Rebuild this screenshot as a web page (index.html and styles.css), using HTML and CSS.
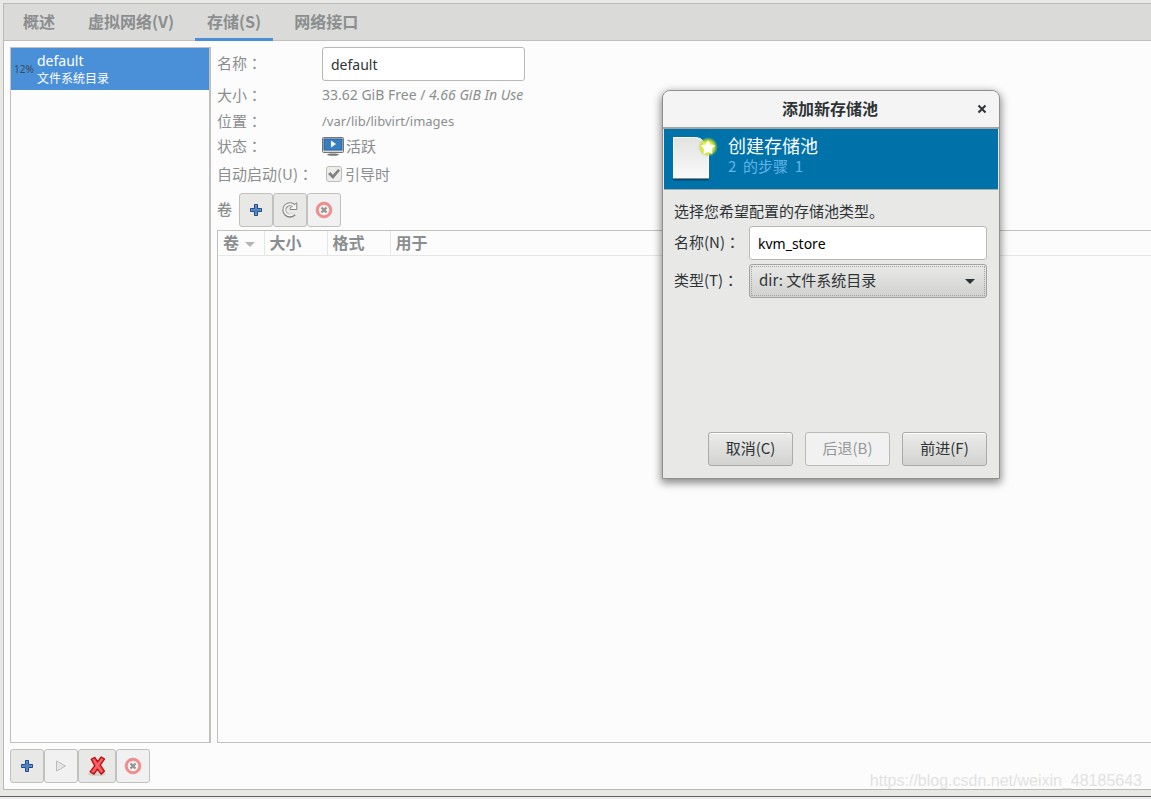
FILE: index.html
```html
<!DOCTYPE html>
<html lang="zh-CN">
<head>
<meta charset="utf-8">
<title>存储</title>
<link rel="stylesheet" href="styles.css">
</head>
<body>
<svg class="defs" width="0" height="0" aria-hidden="true">
  <defs>
    <linearGradient id="page" x1="0" y1="0" x2="0" y2="1"><stop offset="0" stop-color="#e2e3e0"/><stop offset="1" stop-color="#fafafa"/></linearGradient>
    <radialGradient id="glow"><stop offset=".45" stop-color="#f4f53a"/><stop offset=".7" stop-color="#c9de28" stop-opacity=".8"/><stop offset="1" stop-color="#a8d030" stop-opacity="0"/></radialGradient>
    <symbol id="plus" viewBox="0 0 16 16"><path d="M6.5 2.5h3v4h4v3h-4v4h-3v-4h-4v-3h4z" fill="#6f9cd2" stroke="#204a87" stroke-linejoin="round"/><path d="M8 4v8M4 8h8" stroke="#3f74b6" fill="none"/></symbol>
    <symbol id="stop" viewBox="0 0 18 18"><circle cx="9" cy="9" r="6.6" fill="#f5f1f0" stroke="#ef8d8d" stroke-width="2.6"/><circle cx="9" cy="9" r="8" fill="none" stroke="#e88787" stroke-width=".6"/><path d="M6.500 6.500l5 5M11.500 6.500l-5 5" stroke="#929492" stroke-width="2.2"/></symbol>
  </defs>
</svg>
<main class="window">
  <nav class="tabs">
    <button class="tab">概述</button>
    <button class="tab">虚拟网络(V)</button>
    <button class="tab active">存储(S)</button>
    <button class="tab">网络接口</button>
  </nav>
  <div class="content">
    <aside class="side">
      <div class="pools">
        <div class="pool">
          <span class="percent">12%</span>
          <div class="pool-text"><span class="pool-name">default</span><span class="pool-type">文件系统目录</span></div>
        </div>
      </div>
      <div class="toolbar">
        <button class="tool" aria-label="添加池"><svg width="16" height="16"><use href="#plus"/></svg></button>
        <button class="tool off" aria-label="启动池" disabled><svg width="16" height="16" viewBox="0 0 16 16"><path d="M3.5 3l9 5-9 5z" fill="#e6e6e5" stroke="#bbbcba" stroke-linejoin="round"/></svg></button>
        <button class="tool wide" aria-label="停止池"><svg width="20" height="20" viewBox="0 0 20 20"><ellipse cx="10" cy="18" rx="9" ry="2" fill="#cfcfcd"/><path d="M4.200 3.200L7.800 1.400L10.600 5.600L14.200 .9L17.600 3L13.400 9L17.400 15.200L14.200 18.200L10.400 13.400L7 18.200L3 15.800L7.600 9.800Z" fill="#ef4b4b" stroke="#b50d14" stroke-width="1.2" stroke-linejoin="round"/><path d="M6.500 3.400L14.800 16M15 3L5.600 16" stroke="#ff8080" fill="none"/></svg></button>
        <button class="tool off" aria-label="删除池" disabled><svg width="18" height="18"><use href="#stop"/></svg></button>
      </div>
    </aside>
    <section class="details">
      <div class="form">
        <label for="pool-name">名称<span class="colon" lang="zh-TW">：</span></label>
        <input class="entry" id="pool-name" value="default">
        <span>大小<span class="colon" lang="zh-TW">：</span></span>
        <span class="value">33.62 GiB Free / <i>4.66 GiB In Use</i></span>
        <span>位置<span class="colon" lang="zh-TW">：</span></span>
        <span class="value path">/var/lib/libvirt/images</span>
        <span>状态<span class="colon" lang="zh-TW">：</span></span>
        <span class="state"><svg width="22" height="20" viewBox="0 0 22 20"><ellipse cx="11" cy="18.6" rx="6" ry="1.2" fill="#777"/><path d="M8 15h6v3H8z" fill="#bbb"/><rect x=".5" y="1.5" width="21" height="15" rx="1" fill="#d8d8d6" stroke="#747673"/><rect x="2" y="3" width="18" height="11" fill="#397fc0" stroke="#2865a2"/><path d="M9 4.500v7l5-3.500z" fill="#fff"/></svg>活跃</span>
        <span>自动启动(U)<span class="colon" lang="zh-TW">：</span></span>
        <label class="auto"><input class="check" type="checkbox" checked>引导时</label>
      </div>
      <div class="volume-bar">
        <b>卷</b>
        <div class="toolbar">
          <button class="tool" aria-label="新建卷"><svg width="16" height="16"><use href="#plus"/></svg></button>
          <button class="tool" aria-label="刷新"><svg width="18" height="18" viewBox="0 0 18 18"><path d="M13.3 13A5.8 5.8 0 1 1 13 4.8" fill="none" stroke="#858784" stroke-width="4"/><path d="M15.8 1.8v6.7H9.2v-1.8l3-2z" fill="#f4f4f3" stroke="#858784"/><path d="M12.9 12.5A5.5 5.5 0 1 1 13.3 5.5" fill="none" stroke="#f4f4f3" stroke-width="2"/></svg></button>
          <button class="tool off" aria-label="删除卷" disabled><svg width="18" height="18"><use href="#stop"/></svg></button>
        </div>
      </div>
      <div class="volumes">
        <table>
          <colgroup><col class="c1"><col class="c2"><col class="c3"><col></colgroup>
          <thead><tr><th>卷<svg class="sort" width="10" height="5" viewBox="0 0 10 5"><path d="M0 0h10L5 5z" fill="#b4b6b4"/></svg></th><th>大小</th><th>格式</th><th>用于</th></tr></thead>
        </table>
      </div>
    </section>
  </div>
</main>
<footer class="edge"></footer>
<div class="watermark">https://blog.csdn.net/weixin_48185643</div>

<div class="dialog" role="dialog" aria-labelledby="dialog-title">
  <header class="titlebar">
    <h1 id="dialog-title">添加新存储池</h1>
    <button class="close" aria-label="关闭"><svg width="10" height="10" viewBox="0 0 10 10"><path d="M1.500 1.500l7 7M8.500 1.500l-7 7" stroke="#2e3436" stroke-width="2"/></svg></button>
  </header>
  <div class="banner">
    <svg width="48" height="48" viewBox="0 0 48 48"><path d="M3 45h36v1.500H3z" fill="#024b73"/><path d="M3.500 3.500h22q5 0 8 4t5 9v28h-35z" fill="url(#page)" stroke="#fff"/><path d="M3 44.500h36" stroke="#8a8c89"/><circle cx="38" cy="13" r="10" fill="url(#glow)"/><path d="M38 7l2 4 4.500.7-3.200 3.200.7 4.500-4-2-4 2 .7-4.500-3.200-3.200 4.500-.7z" fill="#fff" stroke="#fff" stroke-linejoin="round"/></svg>
    <div><h2>创建存储池</h2><p>2 &nbsp;的步骤 &nbsp;1</p></div>
  </div>
  <form class="dialog-body">
    <p class="hint">选择您希望配置的存储池类型。</p>
    <div class="fields">
      <label for="new-name">名称(N)<span class="colon" lang="zh-TW">：</span></label>
      <input class="entry" id="new-name" value="kvm_store">
      <label for="new-type">类型(T)<span class="colon" lang="zh-TW">：</span></label>
      <span class="select-wrap"><select id="new-type"><option>dir: 文件系统目录</option></select><svg class="arrow" width="10" height="5" viewBox="0 0 10 5"><path d="M0 0h10L5 5z" fill="#2e3436"/></svg></span>
    </div>
    <div class="actions">
      <button type="button" class="action">取消(C)</button>
      <button type="button" class="action" disabled>后退(B)</button>
      <button type="button" class="action">前进(F)</button>
    </div>
  </form>
</div>
</body>
</html>
```
FILE: styles.css
```css
* { box-sizing: border-box; }
body {
  margin: 0;
  height: 100vh;
  display: flex;
  flex-direction: column;
  overflow: hidden;
  background: #e8e8e7;
  color: #8b8e8f;
  font: 15px/24px "Noto Sans CJK SC", sans-serif;
}
button, input, select { font: inherit; color: inherit; margin: 0; }
svg { display: block; flex: none; }
.defs { position: absolute; }
h1, h2, p { margin: 0; }
.colon { font-family: "Noto Sans CJK TC", sans-serif; }

.window {
  flex: 1;
  min-height: 0;
  display: flex;
  flex-direction: column;
  margin: 3px 0 6px 3px;
  border: 1px solid #b9b9b6;
  border-right: 0;
  background: #fcfcfc;
}
.tabs {
  display: flex;
  gap: 9px;
  padding-left: 7px;
  height: 37px;
  flex: none;
  background: #dadad8;
  border-bottom: 1px solid #c0c0bd;
}
.tab {
  border: 0;
  border-bottom: 3px solid transparent;
  background: none;
  padding: 0 12px 1px;
  height: 37px;
  font-size: 16px;
  font-weight: 700;
}
.tab.active { border-bottom-color: #4a90d9; }

.content { flex: 1; min-height: 0; display: flex; gap: 6px; padding: 6px 0 6px 6px; }
.side { width: 201px; flex: none; display: flex; flex-direction: column; gap: 6px; }
.pools { flex: 1; border: 1px solid #c0c0bd; border-right-width: 2px; }
.pool { display: flex; align-items: center; gap: 3px; height: 42px; padding-left: 3px; background: #4a90d9; color: #fff; }
.percent { width: 20px; font: 10px/14px "Noto Sans", sans-serif; color: #3c4a5a; }
.pool-text { display: flex; flex-direction: column; }
.pool-name { font: 14px/18px "Noto Sans", sans-serif; }
.pool-type { font-size: 12px; line-height: 16px; }

.toolbar { display: flex; }
.tool {
  width: 34px;
  height: 34px;
  padding: 0;
  display: flex;
  align-items: center;
  justify-content: center;
  border: 1px solid #c0c0bc;
  border-radius: 3px;
  background: #e8e8e7;
}
.tool.wide { width: 38px; }
.tool.off { background: #f1f1f1; }

.details { flex: 1; min-width: 0; display: flex; flex-direction: column; }
.form { display: grid; grid-template-columns: 105px 1fr; grid-template-rows: 34px 28px 24px 26px 30px; align-items: center; }
.form > label:first-child { padding-bottom: 2px; }
.entry {
  width: 203px;
  height: 34px;
  padding: 0 8px;
  border: 1px solid #b8b8b5;
  border-radius: 3px;
  background: #fff;
  color: #2e3436;
  font: 14px/20px "Noto Sans", sans-serif;
}
.value { font: 14px/20px "Noto Sans", sans-serif; }
.value.path { font-size: 13px; }
.state { display: flex; align-items: center; gap: 2px; }
.auto { display: flex; align-items: center; gap: 3px; padding-left: 4px; }
.check {
  appearance: none;
  width: 16px;
  height: 16px;
  border: 1px solid #bdbdb9;
  border-radius: 3px;
  background: #ececeb;
  display: grid;
  place-items: center;
}
.check::before { content: ""; width: 12px; height: 10px; background: #7e8182; clip-path: polygon(0 50%, 20% 30%, 40% 58%, 85% 0, 100% 16%, 42% 100%); }
.volume-bar { display: flex; align-items: center; gap: 7px; margin-top: 4px; }
.volume-bar b { padding-bottom: 2px; font-weight: 500; }
.volumes { flex: 1; margin: 3px 0 40px; border: 1px solid #c0c0bd; border-right: 0; }
table { width: 100%; border-collapse: collapse; table-layout: fixed; }
.c1 { width: 46px; }
.c2 { width: 63px; }
.c3 { width: 63px; }
th { height: 24px; padding: 0 0 2px 5px; border-bottom: 1px solid #e6e6e5; border-right: 1px solid #e6e6e5; text-align: left; font-size: 16px; line-height: 22px; font-weight: 700; white-space: nowrap; }
th:last-child { border-right: 0; }
.sort { display: inline-block; margin-left: 6px; vertical-align: 2px; }

.edge { height: 3px; flex: none; border-top: 1px solid #5f6163; background: #ececec; }
.watermark { position: absolute; right: 9px; bottom: 8px; font: 16px/20px "Liberation Sans", sans-serif; color: #e2e2e1; }

.dialog {
  position: absolute;
  left: 662px;
  top: 90px;
  width: 338px;
  border: 1px solid #8e908e;
  border-radius: 8px 8px 0 0;
  background: #e8e8e7;
  color: #2e3436;
  box-shadow: 0 3px 8px 1px #0007;
}
.titlebar {
  display: grid;
  grid-template-columns: 32px 1fr 34px;
  align-items: center;
  height: 38px;
  padding-right: 0;
  border-bottom: 2px solid #a3a5a2;
  border-radius: 7px 7px 0 0;
  background: #f4f4f4;
}
.titlebar h1 { grid-column: 2; padding-bottom: 2px; text-align: center; font-size: 16px; line-height: 24px; font-weight: 700; }
.close { padding: 0 12px; border: 0; background: none; }
.banner { display: flex; gap: 10px; height: 61px; padding: 5px 6px; margin: 0 1px; border-bottom: 1px solid #aaaca9; background: #0072aa; color: #fff; }
.banner h2 { font-size: 18px; line-height: 22px; font-weight: 400; }
.banner p { color: #62b4e6; line-height: 20px; }
.dialog-body { padding: 9px 12px 12px 11px; }
.hint { height: 27px; }
.fields { display: grid; grid-template-columns: 75px 1fr; row-gap: 4px; align-items: center; }
.fields label { padding-bottom: 2px; }
.fields .entry { width: 100%; color: #000; }
.select-wrap { display: grid; align-items: center; }
.select-wrap > * { grid-area: 1 / 1; }
select {
  appearance: none;
  width: 100%;
  height: 34px;
  padding: 0 9px 2px;
  border: 1px solid #a2a4a0;
  border-radius: 3px;
  background: linear-gradient(#e9e9e8, #d1d1cf);
  outline: 1px dotted #a2a4a1;
  outline-offset: -3px;
}
.arrow { justify-self: end; margin-right: 12px; pointer-events: none; }
.actions { display: flex; justify-content: flex-end; gap: 12px; margin-top: 134px; }
.action {
  width: 85px;
  height: 34px;
  padding: 0 0 2px;
  border: 1px solid #a9aba7;
  border-radius: 3px;
  background: linear-gradient(#ececeb, #d2d2d0);
  box-shadow: inset 0 1px #fff;
}
.action:disabled { color: #959899; background: #f1f1f1; border-color: #babab7; box-shadow: none; }
```
